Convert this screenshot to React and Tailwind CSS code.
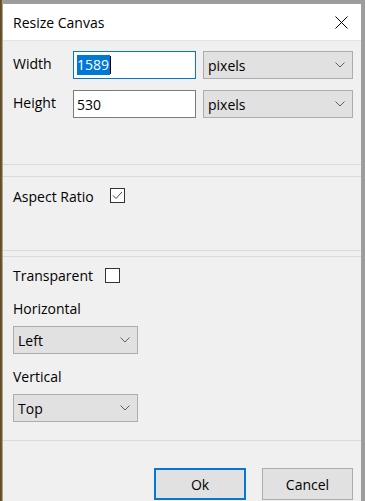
import React from 'react';

const font = { fontFamily: '"Open Sans", "Noto Sans", sans-serif' };

function Chevron() {
  return (
    <svg width="10" height="6" viewBox="0 0 10 6" className="shrink-0">
      <path d="M0.5 0.5 L5 5 L9.5 0.5" fill="none" stroke="#5f5f5f" strokeWidth="1" />
    </svg>
  );
}

function Select({ value, className }) {
  return (
    <div className={`flex items-center justify-between pl-[4px] pr-[7px] bg-[#e1e1e1] border border-[#adadad] text-[14px] text-black ${className}`}>
      <span>{value}</span>
      <Chevron />
    </div>
  );
}

function Checkbox({ checked }) {
  return (
    <div className="w-[15px] h-[15px] border border-[#333333] bg-white flex items-center justify-center">
      {checked && (
        <svg width="11" height="9" viewBox="0 0 11 9">
          <path d="M1 4.5 L4 7.5 L10 1" fill="none" stroke="#444444" strokeWidth="1" />
        </svg>
      )}
    </div>
  );
}

export default function App() {
  return (
    <div
      className="w-[365px] h-[501px] overflow-hidden pt-[3px] pl-[2px] pr-[3px] bg-[linear-gradient(to_right,#5b4522_0px,#7a6030_2px,#9c9c9c_2px)]"
      style={font}
    >
      <div className="h-full border-l border-t border-r border-[#a0a0a0] bg-[#f0f0f0] flex flex-col">
        {/* title bar */}
        <div className="h-[37px] bg-white flex items-center justify-between pl-[10px] pr-[13px] border-b border-[#e3e3e3]">
          <span className="text-[14px] text-black">Resize Canvas</span>
          <svg width="13" height="13" viewBox="0 0 13 13">
            <path d="M0.5 0.5 L12.5 12.5 M12.5 0.5 L0.5 12.5" stroke="#000" strokeWidth="1" />
          </svg>
        </div>

        {/* size */}
        <div className="h-[124px] pt-[10px] pl-[10px] pr-[8px] border-b border-[#dadada] flex flex-col gap-[11px]">
          <div className="flex items-center h-[28px]">
            <span className="w-[60px] text-[14px] text-black -mt-[3px]">Width</span>
            <div className="w-[123px] h-[28px] border border-[#0078d7] bg-white flex items-center pl-[3px]">
              <span className="bg-[#0078d7] text-white text-[14px] leading-[20px] pr-[1px]">1589</span>
              <span className="w-[1px] h-[18px] bg-black" />
            </div>
            <Select value="pixels" className="ml-[7px] w-[150px] h-[28px]" />
          </div>
          <div className="flex items-center h-[28px]">
            <span className="w-[60px] text-[14px] text-black -mt-[3px]">Height</span>
            <div className="w-[123px] h-[28px] border border-[#7a7a7a] bg-white flex items-center pl-[3px]">
              <span className="text-black text-[14px]">530</span>
            </div>
            <Select value="pixels" className="ml-[7px] w-[150px] h-[28px]" />
          </div>
        </div>

        {/* aspect */}
        <div className="mt-[11px] h-[75px] border-t border-b border-[#dadada] pt-[11px] pl-[10px] flex items-start gap-[16px]">
          <span className="text-[14px] text-black leading-[15px] mt-[1px]">Aspect Ratio</span>
          <Checkbox checked />
        </div>

        {/* placement */}
        <div className="mt-[5px] h-[185px] border-t border-b border-[#dadada] pt-[11px] pl-[10px] flex flex-col">
          <div className="flex items-center gap-[12px]">
            <span className="text-[14px] text-black leading-[15px]">Transparent</span>
            <Checkbox />
          </div>
          <span className="mt-[18px] text-[14px] text-black leading-[16px]">Horizontal</span>
          <Select value="Left" className="mt-[9px] w-[125px] h-[28px]" />
          <span className="mt-[15px] text-[14px] text-black leading-[16px]">Vertical</span>
          <Select value="Top" className="mt-[9px] w-[125px] h-[28px]" />
        </div>

        {/* buttons */}
        <div className="flex justify-end gap-[16px] pt-[27px] pr-[8px]">
          <div className="w-[92px] h-[32px] border-2 border-[#0078d7] bg-[#e1e1e1] flex items-center justify-center text-[14px] text-black">
            Ok
          </div>
          <div className="w-[91px] h-[32px] border border-[#adadad] bg-[#e1e1e1] flex items-center justify-center text-[14px] text-black">
            Cancel
          </div>
        </div>
      </div>
    </div>
  );
}
